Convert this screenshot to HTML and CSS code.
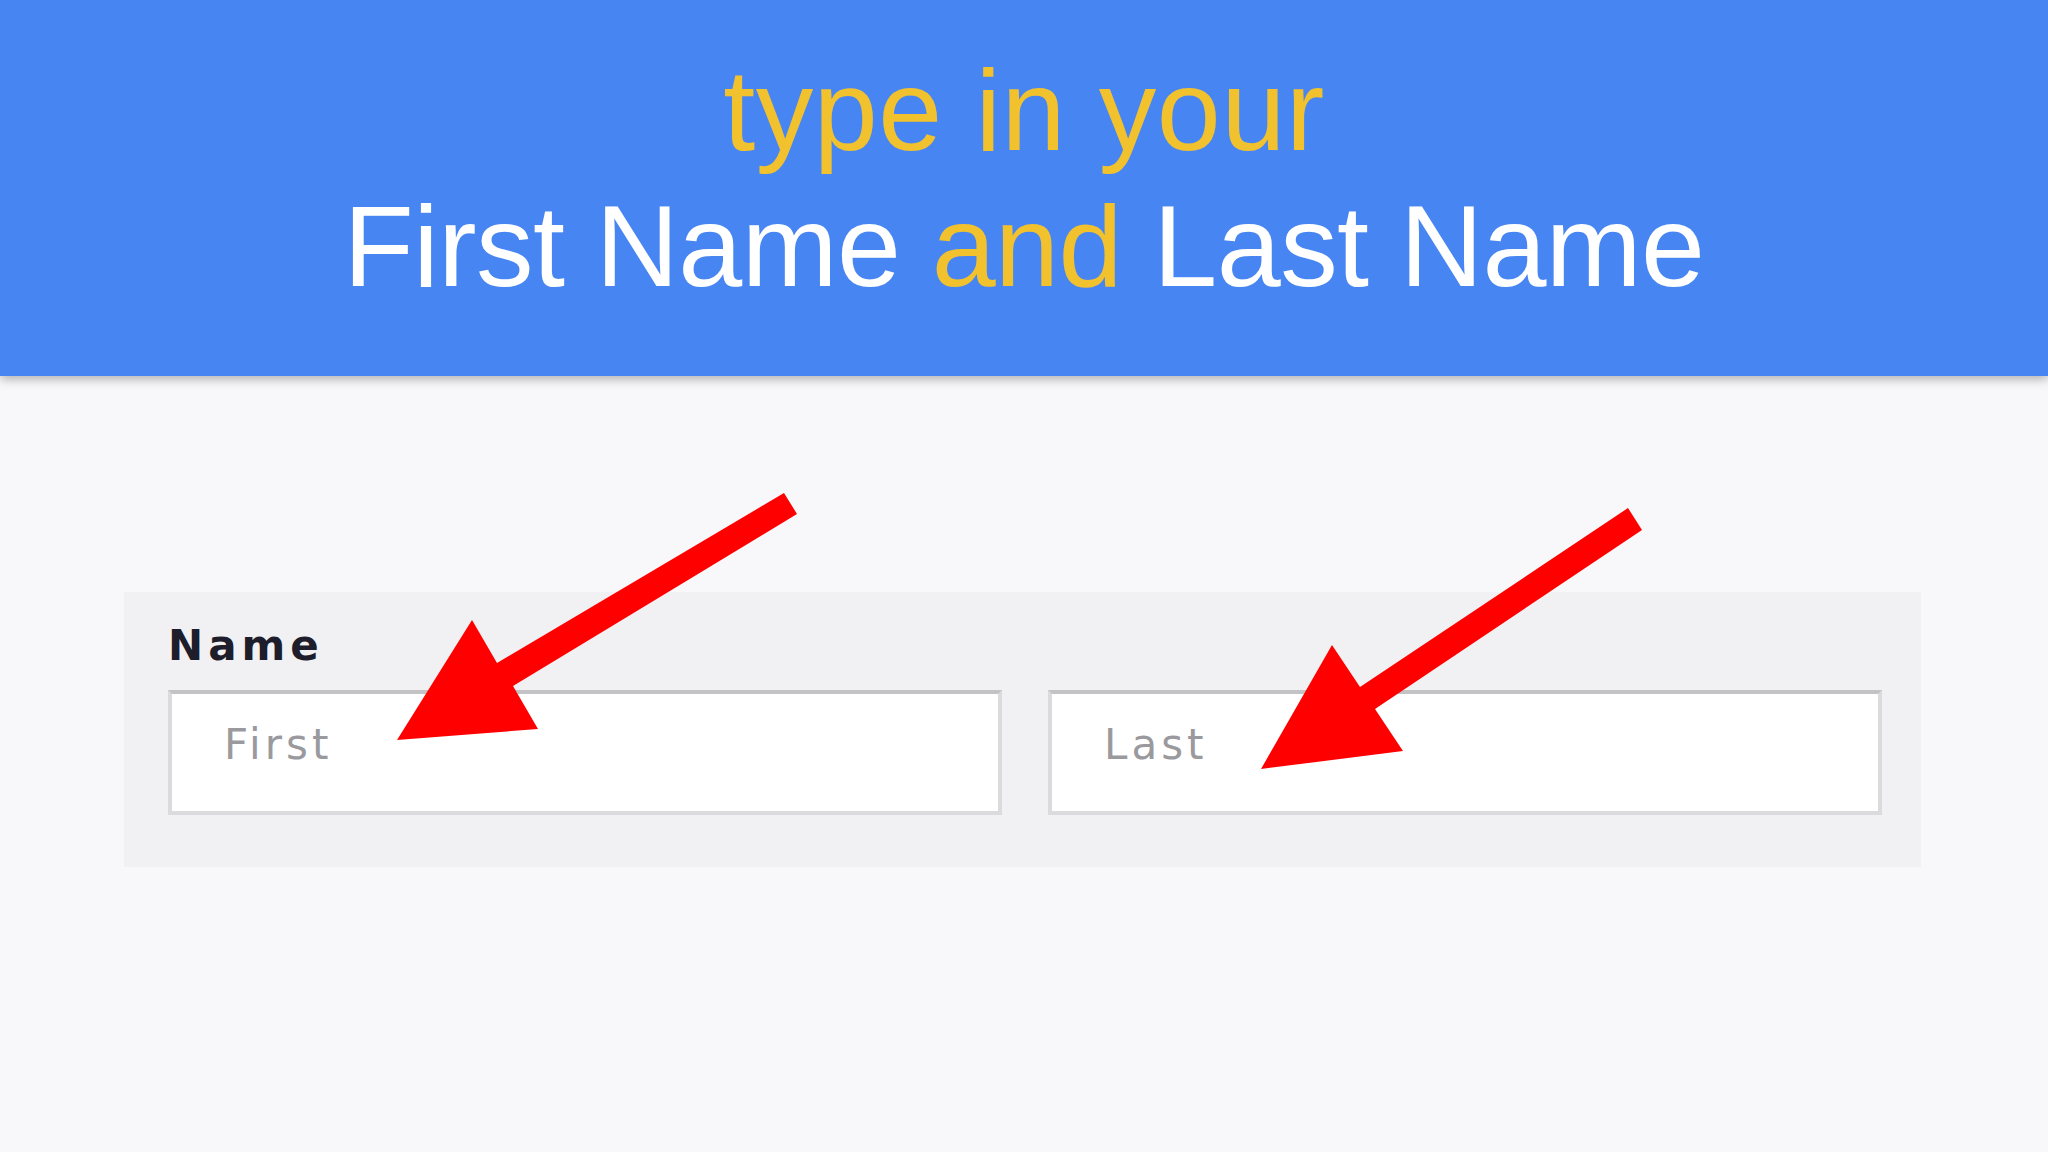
FILE: index.html
```html
<!DOCTYPE html>
<html lang="en">
<head>
    <meta charset="UTF-8">
    <title>Name fields</title>
    <link rel="stylesheet" href="styles.css">
</head>
<body>
    <header class="banner">
        <h1 class="banner-title">
            <span class="accent line-one">type in your</span><br>
            <span class="line-two">First Name <span class="accent">and</span> Last Name</span>
        </h1>
    </header>

    <main class="form-area">
        <div class="name-field">
            <label class="field-label" for="first">Name</label>
            <div class="field-row">
                <input class="field-input" id="first" type="text" placeholder="First">
                <input class="field-input" id="last" type="text" placeholder="Last">
            </div>
        </div>
    </main>

    <!-- arrows drawn over the form -->
    <svg class="arrows" width="2048" height="1152" viewBox="0 0 2048 1152">
        <polygon points="784,493 497,663 472,620 397,740 538,729 513,686 797,514" />
        <polygon points="1628,508 1360,687 1332,645 1261,769 1403,751 1375,709 1642,530" />
    </svg>
</body>
</html>
```

FILE: styles.css
```css
body {
    margin: 0;
    position: relative;
    min-height: 1152px;
    background-color: #f8f7f9;
    font-family: 'DejaVu Sans', sans-serif;
}

.banner {
    height: 376px;
    box-sizing: border-box;
    padding-top: 42px;
    background-color: #4786f2;
    box-shadow: 0 3px 10px rgba(0, 0, 0, 0.3);
    text-align: center;
}

.banner-title {
    margin: 0;
    font-family: 'Liberation Sans', Arial, sans-serif;
    font-weight: normal;
    font-size: 115px;
    line-height: 136px;
    color: #ffffff;
}

.banner-title .accent {
    color: #f2c12e;
}

.banner-title .line-one {
    letter-spacing: 0.6px;
}

.banner-title .line-two {
    letter-spacing: -0.55px;
}

.form-area {
    padding: 216px 0 0 124px;
}

.name-field {
    width: 1797px;
    box-sizing: border-box;
    padding: 30px 0 52px 44px;
    background-color: #f1f0f2;
}

.field-label {
    display: block;
    font-weight: bold;
    font-size: 42px;
    line-height: 48px;
    letter-spacing: 5px;
    color: #1d1d2b;
    margin-bottom: 20px;
}

.field-row {
    display: grid;
    grid-template-columns: 834px 834px;
    gap: 46px;
}

.field-input {
    height: 125px;
    box-sizing: border-box;
    padding: 0 0 16px 52px;
    border: 4px solid #dbdadd;
    border-top-color: #c3c2c5;
    background-color: #ffffff;
    font-family: 'DejaVu Sans', sans-serif;
    font-size: 42px;
    letter-spacing: 4px;
    color: #333333;
    outline: none;
}

.field-input::placeholder {
    color: #9a999e;
    opacity: 1;
    letter-spacing: 4px;
}

.arrows {
    position: absolute;
    top: 0;
    left: 0;
    pointer-events: none;
}

.arrows polygon {
    fill: #ff0000;
}
```
